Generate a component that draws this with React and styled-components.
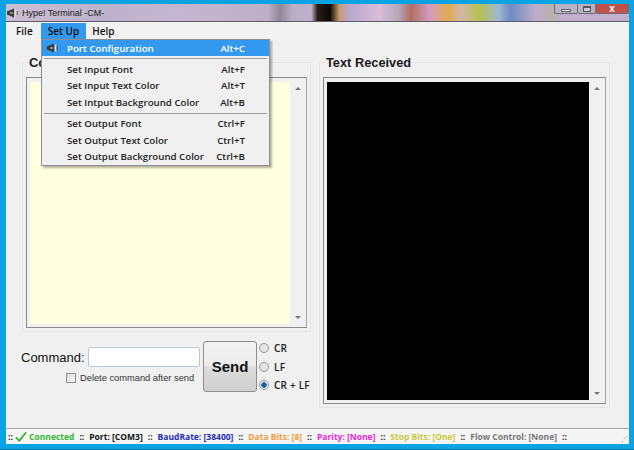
import React from 'react'
import styled, { createGlobalStyle } from 'styled-components'

const Global = createGlobalStyle`
  html, body {
    margin: 0;
    padding: 0;
    background: #0aa3e4;
  }
  * { box-sizing: border-box; }
`

const Desktop = styled.div`
  width: 634px;
  height: 450px;
  padding: 4px 5px 5px 6px;
  background: #0aa3e4;
  border-bottom: 1px solid #0c6f9e;
  overflow: hidden;
  font-family: "Open Sans", "Liberation Sans", sans-serif;
`

const Win = styled.div`
  width: 100%;
  height: 100%;
  display: flex;
  flex-direction: column;
  background: #f0f0f0;
`

const TitleBar = styled.div`
  height: 18px;
  flex: none;
  display: flex;
  align-items: center;
  border-bottom: 1px solid #5f5a68;
  background: linear-gradient(90deg, #cbbfd2 0%, #bcb2cb 15%, #c4b6d0 28%, #bdb0c6 42%, #8e8896 44%, #b9afc4 46%, #bfb1ca 49%, #2a1f18 50%, #0a0806 52%, #c79a70 53.500%, #b7a8cc 55%, #d8bcd8 60%, #b3a8b8 63%, #b06e62 65%, #d49cc0 68%, #e0aa50 71%, #d3b8a8 73%, #b5c050 76%, #9fb8d0 79%, #6f8cc0 81%, #bdaccb 85%, #b5b2a8 88%, #c0aecb 89%);
`

const TitleText = styled.span`
  font: 9px "Liberation Sans", sans-serif;
  color: #222;
`

const CaptionButtons = styled.div`
  margin-left: auto;
  align-self: flex-start;
  display: flex;
  height: 10px;
`

const CaptionButton = styled.div`
  width: ${p => p.$w}px;
  display: flex;
  align-items: center;
  justify-content: center;
  background: ${p => p.$bg};
  border: 1px solid #6d6a78;
  border-top: 0;
  border-left-width: ${p => (p.$first ? 1 : 0)}px;
  border-radius: 0 0 2px 2px;
`

const MinGlyph = styled.span`
  width: 10px;
  height: 3px;
  margin-top: 3px;
  background: #e6e6ee;
  border: 1px solid #666;
`

const MaxGlyph = styled.span`
  width: 8px;
  height: 6px;
  border: 1px solid #555;
  border-top-width: 2px;
  background: #cfcad8;
`

const CloseGlyph = styled.span`
  font: bold 10px/10px "Liberation Sans", sans-serif;
  color: #fff;
`

const MenuBar = styled.div`
  height: 18px;
  flex: none;
  display: flex;
  align-items: stretch;
  padding-left: 3px;
  background: #f2f2f2;
`

const MenuTitle = styled.div`
  font-size: 10px;
  font-weight: 600;
  line-height: 16px;
  color: #111;
  padding: 0 7px;
  margin: ${p => (p.$open ? '1px -1px 1px 1px' : '1px 0')};
  background: ${p => (p.$open ? '#3399ee' : 'transparent')};
`

const Content = styled.div`
  flex: 1;
  display: flex;
  min-height: 0;
  padding: 22px 0 0 16px;
  gap: 8px;
  position: relative;
`

const LeftCol = styled.div`
  width: 289px;
  display: flex;
  flex-direction: column;
`

const RightCol = styled.div`
  width: 291px;
`

const Group = styled.div`
  border: 1px solid #e4e4e4;
  padding: 0 3px 3px;
  height: ${p => p.$h}px;
  display: flex;
  flex-direction: column;
`

const Heading = styled.div`
  font: bold 12.800px/15px "Liberation Sans", sans-serif;
  color: #1a1a1a;
  height: 15px;
  width: fit-content;
  margin: -8px 0 7px 2px;
  padding: 0 1px;
  background: #f0f0f0;
`

const TextBox = styled.div`
  flex: 1;
  display: flex;
  padding: 4px 0 3px 3px;
  background: #f0f0f0;
  border: 1px solid #8a8a8a;
  border-right-color: #a0a0a0;
`

const Pane = styled.div`
  flex: 1;
  background: ${p => p.$bg};
`

const Scrollbar = styled.div`
  width: 16px;
  display: flex;
  flex-direction: column;
  justify-content: space-between;
  align-items: center;
  padding: 5px 0;
`

const Arrow = styled.span`
  width: 0;
  height: 0;
  border-left: 3px solid transparent;
  border-right: 3px solid transparent;
  border-${p => (p.$up ? 'bottom' : 'top')}: 3px solid #777;
`

const CommandRow = styled.div`
  display: flex;
  margin-top: 9px;
`

const CommandMain = styled.div`
  display: flex;
  flex-direction: column;
  width: 179px;
  margin-left: -1px;
  padding-top: 6px;
`

const CommandLine = styled.div`
  display: flex;
  align-items: center;
  justify-content: space-between;
`

const CommandLabel = styled.span`
  font: 13px "Liberation Sans", sans-serif;
  color: #111;
`

const CommandInput = styled.div`
  width: 112px;
  height: 20px;
  background: #fff;
  border: 1px solid #b5c9dc;
  border-radius: 2px;
`

const DeleteRow = styled.label`
  display: flex;
  align-items: center;
  gap: 4px;
  margin: 6px 0 0 45px;
  font: 9.300px "Liberation Sans", sans-serif;
  color: #333;
  white-space: nowrap;
`

const CheckBox = styled.span`
  width: 10px;
  height: 10px;
  background: linear-gradient(135deg, #ddd, #f6f6f6);
  border: 1px solid #8e8e8e;
`

const SendButton = styled.div`
  width: 54px;
  height: 51px;
  margin-left: 3px;
  display: flex;
  align-items: center;
  justify-content: center;
  font: bold 15px "Liberation Sans", sans-serif;
  color: #111;
  border: 1px solid #8d8d8d;
  border-radius: 3px;
  background: linear-gradient(#f3f3f3 0%, #ececec 48%, #dcdcdc 52%, #cfcfcf 100%);
`

const RadioGroup = styled.div`
  display: flex;
  flex-direction: column;
  gap: 8.500px;
  margin-left: 2px;
  padding-top: 2px;
`

const RadioRow = styled.div`
  display: flex;
  align-items: center;
  gap: 5px;
  height: 10px;
  font-size: 10px;
  font-weight: 600;
  letter-spacing: 0.2px;
  color: #222;
  white-space: nowrap;
`

const Radio = styled.span`
  width: 10px;
  height: 10px;
  border-radius: 50%;
  border: 1px solid #999;
  background: ${p => (p.$on ? 'radial-gradient(circle, #1f5f9a 0 2.5px, #e8eef4 3px)' : '#e4e4e4')};
`

const StatusBar = styled.div`
  height: 16px;
  flex: none;
  display: flex;
  align-items: center;
  padding-left: 2px;
  background: #f5f5f5;
  border-top: 1px solid #a8a8a8;
  font-size: 8.500px;
  font-weight: 700;
  white-space: nowrap;
  position: relative;
`

const StatusItem = styled.span`
  color: ${p => p.$color};
  display: inline-flex;
  align-items: center;
`

const Sep = styled.span`
  color: #222;
  margin: 0 5px;
  &:first-child { margin-left: 0; margin-right: 2px; }
`

const Grip = styled.span`
  position: absolute;
  right: 1px;
  bottom: 2px;
  color: #aaa;
  font-size: 7px;
  line-height: 6px;
`

const Dropdown = styled.div`
  position: absolute;
  left: 35px;
  top: -1px;
  width: 229px;
  background: #f0f0f0;
  border: 1px solid #8f8f8f;
  box-shadow: 2px 2px 2px rgba(0, 0, 0, 0.3);
  z-index: 5;
`

const MenuItem = styled.div`
  height: ${p => (p.$active ? 16 : 16.5)}px;
  display: grid;
  grid-template-columns: 25px 1fr auto;
  align-items: center;
  padding-right: 24px;
  font-size: 9.700px;
  font-weight: 600;
  color: ${p => (p.$active ? '#fff' : '#222')};
  background: ${p => (p.$active ? '#3399ee' : 'transparent')};
`

const Shortcut = styled.span`
  text-align: right;
  white-space: nowrap;
`

const MenuSep = styled.div`
  height: 1px;
  margin: 2px 2px;
  background: #a0a0a0;
`

const SpeakerSvg = styled.svg`
  width: 11px;
  height: 10px;
  flex: none;
  margin-left: ${p => p.$left}px;
  margin-right: ${p => p.$right}px;
`

const Speaker = ({ left = 0, right = 0 }) => (
  <SpeakerSvg viewBox="0 0 11 10" $left={left} $right={right}>
    <path d="M0 3.500L7 0.500v9L0 6.500z" fill="#3c3c3c" />
    <path d="M3 4h3v2H3z" fill="#8a8a8a" />
    <path d="M8.500 1.500v7" stroke="#d8d8d8" strokeWidth="1.500" />
    <path d="M10.300 3v4" stroke="#555" />
  </SpeakerSvg>
)

const statusItems = [
  ['Port: [COM3]', '#111'],
  ['BaudRate: [38400]', '#1c2cc0'],
  ['Data Bits: [8]', '#f09a40'],
  ['Parity: [None]', '#ee22dd'],
  ['Stop Bits: [One]', '#c8c83c'],
  ['Flow Control: [None]', '#777'],
]

export default function App() {
  return (
    <Desktop>
      <Global />
      <Win>
        <TitleBar>
          <Speaker left={1} right={4} />
          <TitleText>Hype! Terminal -CM-</TitleText>
          <CaptionButtons>
            <CaptionButton $w={24} $bg="#b9b2c6" $first><MinGlyph /></CaptionButton>
            <CaptionButton $w={18} $bg="#b9b2c6"><MaxGlyph /></CaptionButton>
            <CaptionButton $w={33} $bg="#c0524a"><CloseGlyph>x</CloseGlyph></CaptionButton>
          </CaptionButtons>
        </TitleBar>
        <MenuBar>
          <MenuTitle>File</MenuTitle>
          <MenuTitle $open>Set Up</MenuTitle>
          <MenuTitle>Help</MenuTitle>
        </MenuBar>
        <Content>
          <LeftCol>
            <Group $h={270}>
              <Heading>Command</Heading>
              <TextBox>
                <Pane $bg="#ffffe0" />
                <Scrollbar><Arrow $up /><Arrow /></Scrollbar>
              </TextBox>
            </Group>
            <CommandRow>
              <CommandMain>
                <CommandLine>
                  <CommandLabel>Command:</CommandLabel>
                  <CommandInput />
                </CommandLine>
                <DeleteRow><CheckBox />Delete command after send</DeleteRow>
              </CommandMain>
              <SendButton>Send</SendButton>
              <RadioGroup>
                <RadioRow><Radio />CR</RadioRow>
                <RadioRow><Radio />LF</RadioRow>
                <RadioRow><Radio $on />CR + LF</RadioRow>
              </RadioGroup>
            </CommandRow>
          </LeftCol>
          <RightCol>
            <Group $h={346}>
              <Heading>Text Received</Heading>
              <TextBox>
                <Pane $bg="#000" />
                <Scrollbar><Arrow $up /><Arrow /></Scrollbar>
              </TextBox>
            </Group>
          </RightCol>
          <Dropdown>
            <MenuItem $active><Speaker left={5} /><span>Port Configuration</span><Shortcut>Alt+C</Shortcut></MenuItem>
            <MenuSep />
            <MenuItem><i /><span>Set Input Font</span><Shortcut>Alt+F</Shortcut></MenuItem>
            <MenuItem><i /><span>Set Input Text Color</span><Shortcut>Alt+T</Shortcut></MenuItem>
            <MenuItem><i /><span>Set Intput Background Color</span><Shortcut>Alt+B</Shortcut></MenuItem>
            <MenuSep />
            <MenuItem><i /><span>Set Output Font</span><Shortcut>Ctrl+F</Shortcut></MenuItem>
            <MenuItem><i /><span>Set Output Text Color</span><Shortcut>Ctrl+T</Shortcut></MenuItem>
            <MenuItem><i /><span>Set Output Background Color</span><Shortcut>Ctrl+B</Shortcut></MenuItem>
          </Dropdown>
        </Content>
        <StatusBar>
          <Sep>::</Sep>
          <StatusItem $color="#35b835">
            <svg width="12" height="11" viewBox="0 0 14 12"><path d="M1 7l4 4 8-10" stroke="#35b835" strokeWidth="2.200" fill="none" /></svg>
            &nbsp;Connected
          </StatusItem>
          {statusItems.map(([label, color]) => (
            <React.Fragment key={label}>
              <Sep>::</Sep>
              <StatusItem $color={color}>{label}</StatusItem>
            </React.Fragment>
          ))}
          <Sep>::</Sep>
          <Grip>⋰</Grip>
        </StatusBar>
      </Win>
    </Desktop>
  )
}
